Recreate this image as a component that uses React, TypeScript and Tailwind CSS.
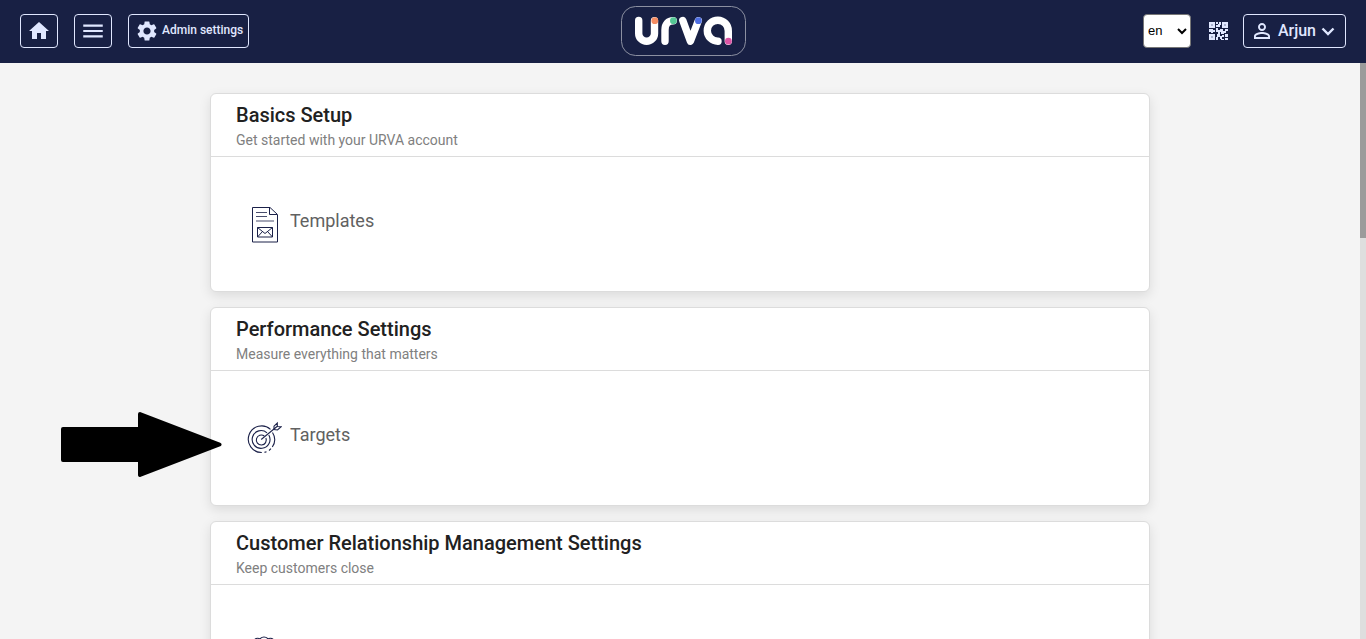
import type { ReactNode } from "react";
import { MdHome, MdMenu, MdSettings, MdPersonOutline } from "react-icons/md";

function Logo() {
  return (
    <svg width="125" height="50" viewBox="0 0 125 50" fill="none" role="img" aria-label="urva">
      <rect x="0.5" y="0.5" width="124" height="49" rx="14" stroke="#8c90a1" />
      <g stroke="#fff" strokeWidth="7.4" strokeLinecap="round" strokeLinejoin="round">
        <path d="M17.7 14.5V27.400a7.900 7.900 0 0 0 15.800 0V14.700" />
        <path d="M44 35.2V24C44 18 47 14.700 52.300 14.700" />
        <path d="M61.8 14.500L69.400 35.300L77.300 14.700" />
        <path d="M107.300 35.200V25A10.500 10.500 0 1 0 97 35.200" />
      </g>
      <circle cx="33.8" cy="14.7" r="3.4" fill="#f58d63" />
      <circle cx="52.4" cy="14.7" r="3.4" fill="#55c795" />
      <circle cx="77.4" cy="14.7" r="3.4" fill="#4f6fe3" />
      <circle cx="107.4" cy="35.2" r="3.4" fill="#dc55a5" />
    </svg>
  );
}

function QrIcon() {
  return (
    <svg width="20" height="20" viewBox="0 0 20 20" fill="#e0e7ff" aria-hidden="true">
      <path d="M0 1h6v6H0zM13 1h6v6h-6zM0 13h6v6H0z" />
      <path fill="#aab2cf" d="M2 3h2v2H2zM15 3h2v2h-2zM2 15h2v2H2z" />
      <path d="M7 1h2v2H7zM10 1h2v3h-1v2H7V4h2V3h1zM0 8h4v1h2v2H4v1H2v-1H0zM7 7h2v2h2V8h3v2h2V8h3v2h-2v2h-2v1h-3v-2h-1v2H9v-2H7zM8 13h3v2h2v-1h2v2h-2v2h-2v-2H9v3H7v-3h1zM16 13h3v3h-3zM12 18h3v1h-3zM16 17h3v2h-3z" />
    </svg>
  );
}

function ChevronIcon() {
  return (
    <svg width="16" height="16" viewBox="0 0 16 16" fill="none" aria-hidden="true">
      <path d="M2.500 5.500L8 11L13.500 5.500" stroke="currentColor" strokeWidth="2.4" />
    </svg>
  );
}

function TemplateIcon() {
  return (
    <svg width="36" height="36" viewBox="-1 0 36 36" fill="none" stroke="#1b2149" aria-hidden="true">
      <path d="M5.500 0.500H23L30.500 7.500V35H5.500z" />
      <path d="M22.500 0.500V7.500H30" />
      <path d="M9 5.500H20M9 9.500H20M9 14H27" strokeOpacity="0.8" />
      <path d="M10.500 20.500H25.500V30H10.500zM10.500 20.500L18 26.500L25.500 20.500M10.500 30L15.500 24.500M25.500 30L20.500 24.500" />
    </svg>
  );
}

function TargetIcon() {
  return (
    <svg width="36" height="36" viewBox="0 0 36 36" fill="none" stroke="#1b2149" strokeWidth="1.1" aria-hidden="true">
      <path d="M24.500 8.300A13.300 13.300 0 1 0 15.800 31.500M26.500 11.500A13.300 13.300 0 0 1 26.300 26" />
      <path d="M18.500 31.400l2-.6M23 29.500l2-1.800" />
      <path d="M21 11.800A8.900 8.900 0 1 0 22.800 14" />
      <path d="M18.300 15A5 5 0 1 0 19.900 17" />
      <path d="M15.200 18.500L31 5.500" />
      <path d="M28 8.500V5.200L31.300 2V5.500L35 5.800L31.500 9z" />
    </svg>
  );
}

function CustomersIcon() {
  return (
    <svg width="36" height="36" viewBox="0 0 36 36" fill="none" stroke="#1b2149" strokeWidth="1.1" aria-hidden="true">
      <path d="M13 7a5 5 0 0 1 10 0a5 5 0 0 1-10 0z" />
      <path d="M14 4a4 4 0 1 0-1 7M22 4a4 4 0 1 1 1 7" />
      <path d="M9 26v-6a9 9 0 0 1 18 0v6zM9 23H2v-4a7 7 0 0 1 7-6M27 23h7v-4a7 7 0 0 0-7-6" />
    </svg>
  );
}

type SectionProps = { title: string; subtitle: string; link?: string; icon: ReactNode };

function Section({ title, subtitle, link, icon }: SectionProps) {
  return (
    <section className="rounded-md border border-[#dcdcdc] bg-white shadow-[0_4px_12px_rgba(0,0,0,0.1)]">
      <header className="border-b border-[#dcdcdc] px-[25px] pt-[9px] pb-1.5">
        <h2 className="text-xl leading-6 font-medium text-[#212121]">{title}</h2>
        <p className="mt-[3px] text-sm leading-5 text-[#808080]">{subtitle}</p>
      </header>
      <div className="px-[35px] pt-[50px] pb-12">
        <a
          href="#"
          aria-label={link ?? title}
          className="inline-flex items-start gap-2 align-top text-lg leading-7 text-[#616161]"
        >
          {icon}
          {link}
        </a>
      </div>
    </section>
  );
}

const outlined = "flex h-[34px] items-center justify-center rounded border border-[#e0e7ff] text-[#e0e7ff]";

export default function App() {
  return (
    <div className="flex h-screen flex-col bg-[#f4f4f4] font-[Roboto,sans-serif]">
      <nav className="grid h-[63px] shrink-0 grid-cols-[1fr_auto_1fr] items-center bg-[#182044] px-5 pb-0.5">
        <div className="flex items-center gap-4">
          <button type="button" aria-label="Home" className={`${outlined} w-[38px]`}>
            <MdHome size={24} />
          </button>
          <button type="button" aria-label="Menu" className={`${outlined} w-[38px]`}>
            <MdMenu size={26} />
          </button>
          <button type="button" className={`${outlined} gap-[3px] pr-[5px] pl-1.5 text-xs font-medium`}>
            <MdSettings size={24} />
            <span className="pb-0.5">Admin settings</span>
          </button>
        </div>
        <Logo />
        <div className="flex items-center justify-end">
          <select
            aria-label="Language"
            defaultValue="en"
            className="h-[34px] w-12 rounded border border-[#767676] bg-white font-['Liberation_Sans',sans-serif] text-[13px] text-black"
          >
            <option value="en">en</option>
            <option value="hi">hi</option>
          </select>
          <button type="button" aria-label="QR code" className="mr-3.5 ml-[18px]">
            <QrIcon />
          </button>
          <button type="button" className={`${outlined} gap-1 pr-[9px] pl-1.5 text-base font-medium`}>
            <MdPersonOutline size={24} />
            <span>Arjun</span>
            <ChevronIcon />
          </button>
        </div>
      </nav>
      <div className="flex min-h-0 flex-1">
        <main className="relative min-w-0 flex-1 overflow-y-auto [scrollbar-width:none]">
          <div className="mx-auto flex max-w-[940px] flex-col gap-[15px] py-[30px]">
            <Section
              title="Basics Setup"
              subtitle="Get started with your URVA account"
              link="Templates"
              icon={<TemplateIcon />}
            />
            <Section
              title="Performance Settings"
              subtitle="Measure everything that matters"
              link="Targets"
              icon={<TargetIcon />}
            />
            <Section
              title="Customer Relationship Management Settings"
              subtitle="Keep customers close"
              icon={<CustomersIcon />}
            />
          </div>
          <svg
            className="pointer-events-none absolute top-[349px] left-[61px]"
            width="161"
            height="66"
            viewBox="0 0 161 66"
            aria-hidden="true"
          >
            <path
              d="M2 17H79V2L158.500 32.500L79 63V48H2z"
              stroke="#000"
              strokeWidth="4"
              strokeLinejoin="round"
            />
          </svg>
        </main>
        <div className="w-1.5 shrink-0 bg-[#dedede]" aria-hidden="true">
          <div className="h-[175px] bg-[#9b9b9b]" />
        </div>
      </div>
    </div>
  );
}
